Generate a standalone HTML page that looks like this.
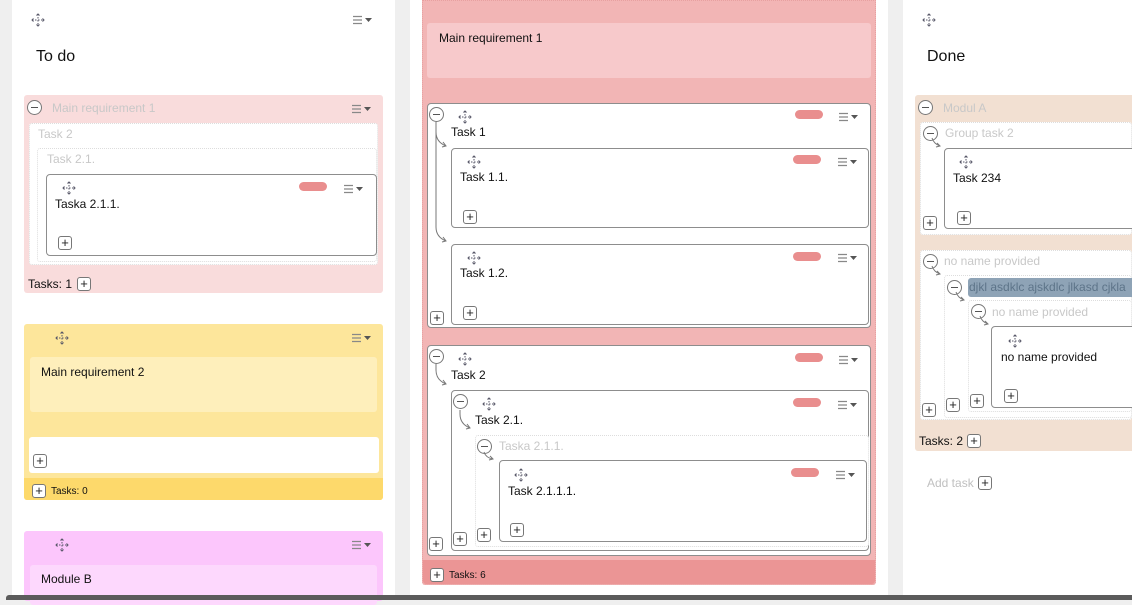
<!DOCTYPE html>
<html><head><meta charset="utf-8"><style>
*{box-sizing:border-box;margin:0;padding:0}
body{width:1132px;height:600px;overflow:hidden;background:#efefef;font-family:"Liberation Sans",Arial,sans-serif;color:#111;position:relative}
div,span{position:absolute}
.col{background:#fff;top:0;height:596px}
.t{font-size:12px;white-space:nowrap;line-height:14px}
.lt{color:#c8c8c8}
.pl{width:14px;height:14px;border:1px solid #777;border-radius:3px;background:#fff;font-size:13px;line-height:11px;text-align:center;color:#222}
.pill{width:28px;height:9px;border-radius:5px;background:#e98e8e}
.card{background:#fff;border:1px solid #8d8d8d;border-radius:4px}
.dot{background:#fff;border:1px dotted #ddd;border-radius:3px}
.mc{width:15px;height:15px;border:1px solid #777;border-radius:50%;background:#fff}
.mc:after{content:"";position:absolute;left:3px;top:6px;width:7px;height:1px;background:#555}
</style></head><body>
<svg width="0" height="0" style="position:absolute"><defs>
<g id="mv" fill="none" stroke="#556" stroke-width="1"><path d="M7 1v12M1 7h12" stroke-dasharray="1.5 1.5"/><path d="M5.5 2.5L7 1l1.5 1.5M5.5 11.5L7 13l1.5-1.5M2.5 5.5L1 7l1.5 1.5M11.5 5.5L13 7l-1.5 1.5"/></g>
<g id="hb"><path d="M0 1.5h9M0 5h9M0 8.5h9" stroke="#888" stroke-width="1.2"/><path d="M12 3h7l-3.5 4z" fill="#555"/></g>
</defs></svg>

<div class="col" style="left:12px;width:383px"></div>
<div class="col" style="left:410px;width:478px"></div>
<div class="col" style="left:903px;width:229px"></div>

<!-- Column 1 -->
<svg style="position:absolute;left:31px;top:13px" width="14" height="14"><use href="#mv"/></svg>
<svg style="position:absolute;left:353px;top:15px" width="20" height="10"><use href="#hb"/></svg>
<div class="t" style="left:36px;top:48px;font-size:16px;line-height:18px">To do</div>

<div style="left:24px;top:95px;width:359px;height:198px;background:#f9dcdc;border-radius:3px"></div>
<div class="mc" style="left:27px;top:100px"></div>
<div class="t lt" style="left:52px;top:101px">Main requirement 1</div>
<svg style="position:absolute;left:352px;top:104px" width="20" height="10"><use href="#hb"/></svg>
<div class="dot" style="left:29px;top:123px;width:349px;height:142px"></div>
<div class="t lt" style="left:38px;top:127px">Task 2</div>
<div class="dot" style="left:37px;top:148px;width:340px;height:114px"></div>
<div class="t lt" style="left:47px;top:152px">Task 2.1.</div>
<div class="card" style="left:46px;top:174px;width:331px;height:82px"></div>
<svg style="position:absolute;left:62px;top:181px" width="14" height="14"><use href="#mv"/></svg>
<div class="pill" style="left:299px;top:182px"></div>
<svg style="position:absolute;left:344px;top:184px" width="20" height="10"><use href="#hb"/></svg>
<div class="t" style="left:55px;top:197px">Taska 2.1.1.</div>
<div class="pl" style="left:58px;top:236px">+</div>
<div class="t" style="left:28px;top:277px">Tasks: 1</div>
<div class="pl" style="left:77px;top:277px">+</div>

<div style="left:24px;top:324px;width:359px;height:176px;background:#fde69b;border-radius:3px"></div>
<svg style="position:absolute;left:55px;top:331px" width="14" height="14"><use href="#mv"/></svg>
<svg style="position:absolute;left:352px;top:333px" width="20" height="10"><use href="#hb"/></svg>
<div style="left:30px;top:357px;width:347px;height:55px;background:#feefbb;border-radius:3px"></div>
<div class="t" style="left:41px;top:365px">Main requirement 2</div>
<div style="left:29px;top:437px;width:350px;height:36px;background:#fff;border-radius:3px"></div>
<div class="pl" style="left:33px;top:454px">+</div>
<div style="left:24px;top:478px;width:359px;height:22px;background:#fdd96b;border-radius:0 0 3px 3px"></div>
<div class="pl" style="left:32px;top:484px">+</div>
<div class="t" style="left:51px;top:485px;font-size:10px">Tasks: 0</div>

<div style="left:24px;top:531px;width:359px;height:70px;background:#fcc6fc;border-radius:3px"></div>
<svg style="position:absolute;left:55px;top:538px" width="14" height="14"><use href="#mv"/></svg>
<svg style="position:absolute;left:352px;top:540px" width="20" height="10"><use href="#hb"/></svg>
<div style="left:30px;top:565px;width:347px;height:40px;background:#fdd8fd;border-radius:3px"></div>
<div class="t" style="left:41px;top:572px">Module B</div>

<!-- Column 2 -->
<div style="left:422px;top:0;width:454px;height:585px;background:#f2b5b5;border-radius:0 0 3px 3px;border:1px dotted #e7a0a0"></div>
<div style="left:427px;top:23px;width:444px;height:55px;background:#f7c9cb;border-radius:3px"></div>
<div class="t" style="left:439px;top:31px">Main requirement 1</div>

<div class="card" style="left:427px;top:103px;width:444px;height:225px"></div>
<div class="mc" style="left:429px;top:107px"></div>
<svg style="position:absolute;left:458px;top:110px" width="14" height="14"><use href="#mv"/></svg>
<div class="t" style="left:451px;top:125px">Task 1</div>
<div class="pill" style="left:795px;top:110px"></div>
<svg style="position:absolute;left:839px;top:112px" width="20" height="10"><use href="#hb"/></svg>
<svg style="position:absolute;left:430px;top:120px" width="20" height="125" fill="none" stroke="#777" stroke-width="1"><path d="M6 2v10q0 10 10 14M13 22l3 4-4 1"/><path d="M6 12v95q0 10 10 14M13 117l3 4-4 1"/></svg>
<div class="card" style="left:451px;top:148px;width:418px;height:80px"></div>
<svg style="position:absolute;left:467px;top:155px" width="14" height="14"><use href="#mv"/></svg>
<div class="t" style="left:460px;top:170px">Task 1.1.</div>
<div class="pill" style="left:793px;top:155px"></div>
<svg style="position:absolute;left:838px;top:157px" width="20" height="10"><use href="#hb"/></svg>
<div class="pl" style="left:463px;top:210px">+</div>
<div class="card" style="left:451px;top:244px;width:418px;height:81px"></div>
<svg style="position:absolute;left:467px;top:251px" width="14" height="14"><use href="#mv"/></svg>
<div class="t" style="left:460px;top:266px">Task 1.2.</div>
<div class="pill" style="left:793px;top:252px"></div>
<svg style="position:absolute;left:838px;top:253px" width="20" height="10"><use href="#hb"/></svg>
<div class="pl" style="left:463px;top:306px">+</div>
<div class="pl" style="left:430px;top:311px">+</div>

<div class="card" style="left:427px;top:345px;width:444px;height:211px"></div>
<div class="mc" style="left:429px;top:349px"></div>
<svg style="position:absolute;left:458px;top:352px" width="14" height="14"><use href="#mv"/></svg>
<div class="t" style="left:451px;top:368px">Task 2</div>
<div class="pill" style="left:795px;top:353px"></div>
<svg style="position:absolute;left:839px;top:355px" width="20" height="10"><use href="#hb"/></svg>
<svg style="position:absolute;left:430px;top:362px" width="20" height="30" fill="none" stroke="#777"><path d="M6 2v6q0 10 10 14M13 18l3 4-4 1"/></svg>
<div class="card" style="left:451px;top:390px;width:418px;height:161px"></div>
<div class="mc" style="left:453px;top:394px"></div>
<svg style="position:absolute;left:482px;top:397px" width="14" height="14"><use href="#mv"/></svg>
<div class="t" style="left:475px;top:413px">Task 2.1.</div>
<div class="pill" style="left:793px;top:398px"></div>
<svg style="position:absolute;left:838px;top:400px" width="20" height="10"><use href="#hb"/></svg>
<svg style="position:absolute;left:454px;top:408px" width="20" height="30" fill="none" stroke="#777"><path d="M6 2v4q0 10 10 14M13 16l3 4-4 1"/></svg>
<div class="dot" style="left:475px;top:435px;width:394px;height:112px"></div>
<div class="mc" style="left:477px;top:439px"></div>
<div class="t lt" style="left:499px;top:439px">Taska 2.1.1.</div>
<svg style="position:absolute;left:478px;top:450px" width="20" height="12" fill="none" stroke="#777"><path d="M6 2q2 6 9 7M12 6l3 3-4 1"/></svg>
<div class="card" style="left:499px;top:460px;width:368px;height:82px"></div>
<svg style="position:absolute;left:514px;top:468px" width="14" height="14"><use href="#mv"/></svg>
<div class="t" style="left:508px;top:484px">Task 2.1.1.1.</div>
<div class="pill" style="left:791px;top:468px"></div>
<svg style="position:absolute;left:836px;top:470px" width="20" height="10"><use href="#hb"/></svg>
<div class="pl" style="left:510px;top:523px">+</div>
<div class="pl" style="left:477px;top:528px">+</div>
<div class="pl" style="left:453px;top:532px">+</div>
<div class="pl" style="left:429px;top:537px">+</div>
<div style="left:423px;top:560px;width:452px;height:24px;background:#eb9595;border-radius:0 0 3px 3px"></div>
<div class="pl" style="left:430px;top:568px">+</div>
<div class="t" style="left:449px;top:569px;font-size:10px">Tasks: 6</div>

<!-- Column 3 -->
<svg style="position:absolute;left:922px;top:13px" width="14" height="14"><use href="#mv"/></svg>
<div class="t" style="left:927px;top:48px;font-size:16px;line-height:18px">Done</div>
<div style="left:915px;top:95px;width:217px;height:356px;background:#f2e0d2;border-radius:3px 0 0 3px"></div>
<div class="mc" style="left:918px;top:100px"></div>
<div class="t lt" style="left:943px;top:101px">Modul A</div>
<div class="dot" style="left:920px;top:122px;width:212px;height:113px"></div>
<div class="mc" style="left:923px;top:126px"></div>
<div class="t lt" style="left:945px;top:126px">Group task 2</div>
<svg style="position:absolute;left:928px;top:136px" width="16" height="14" fill="none" stroke="#777"><path d="M4 2q2 6 8 8M9 7l3 3-4 1"/></svg>
<div class="card" style="left:944px;top:148px;width:200px;height:81px"></div>
<svg style="position:absolute;left:959px;top:155px" width="14" height="14"><use href="#mv"/></svg>
<div class="t" style="left:953px;top:171px">Task 234</div>
<div class="pl" style="left:957px;top:211px">+</div>
<div class="pl" style="left:923px;top:216px">+</div>
<div class="dot" style="left:920px;top:250px;width:212px;height:170px"></div>
<div class="mc" style="left:923px;top:254px"></div>
<div class="t lt" style="left:944px;top:254px">no name provided</div>
<svg style="position:absolute;left:928px;top:264px" width="16" height="14" fill="none" stroke="#777"><path d="M4 2q2 6 8 8M9 7l3 3-4 1"/></svg>
<div class="dot" style="left:944px;top:275px;width:188px;height:143px"></div>
<div class="mc" style="left:947px;top:280px"></div>
<svg style="position:absolute;left:952px;top:290px" width="16" height="14" fill="none" stroke="#777"><path d="M4 2q2 6 8 8M9 7l3 3-4 1"/></svg>
<div style="left:968px;top:278px;width:164px;height:19px;background:#8ea3b6;border-radius:3px 0 0 3px;overflow:hidden"><span class="t" style="left:1px;top:2px;color:#5d7489;font-size:12px">djkl asdklc ajskdlc jlkasd cjkla</span></div>
<div class="dot" style="left:968px;top:300px;width:164px;height:112px"></div>
<div class="mc" style="left:971px;top:304px"></div>
<div class="t lt" style="left:992px;top:305px">no name provided</div>
<svg style="position:absolute;left:976px;top:314px" width="16" height="14" fill="none" stroke="#777"><path d="M4 2q2 6 8 8M9 7l3 3-4 1"/></svg>
<div class="card" style="left:991px;top:326px;width:150px;height:82px"></div>
<svg style="position:absolute;left:1008px;top:334px" width="14" height="14"><use href="#mv"/></svg>
<div class="t" style="left:1001px;top:350px">no name provided</div>
<div class="pl" style="left:1004px;top:389px">+</div>
<div class="pl" style="left:970px;top:394px">+</div>
<div class="pl" style="left:946px;top:398px">+</div>
<div class="pl" style="left:922px;top:403px">+</div>
<div class="t" style="left:919px;top:434px">Tasks: 2</div>
<div class="pl" style="left:967px;top:434px">+</div>
<div class="t" style="left:927px;top:476px;color:#c0c0c0">Add task</div>
<div class="pl" style="left:978px;top:476px">+</div>

<div style="left:6px;top:595px;width:1126px;height:5px;background:#5b5b5b;border-radius:3px 0 0 0"></div>
</body></html>
